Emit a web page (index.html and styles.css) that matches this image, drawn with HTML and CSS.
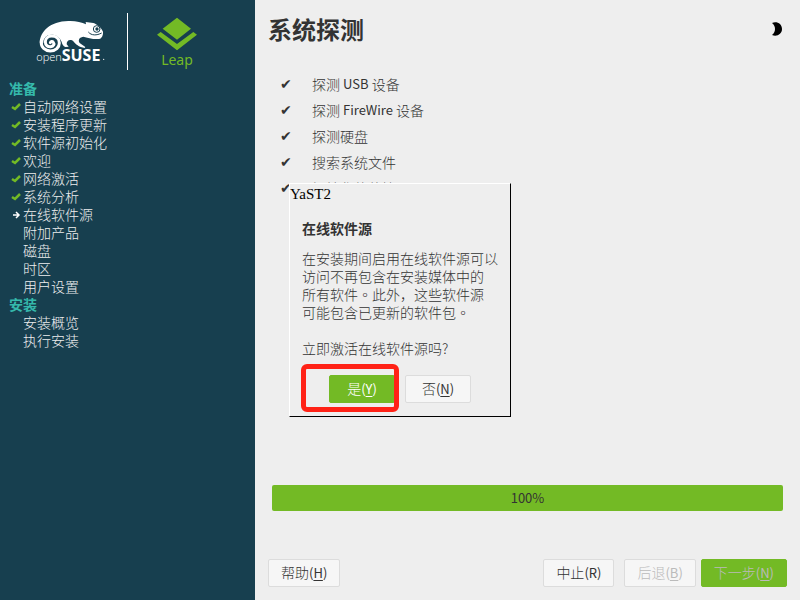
FILE: index.html
```html
<!DOCTYPE html>
<html lang="zh-CN">
<head>
	<meta charset="UTF-8">
	<title>YaST2</title>
	<link rel="stylesheet" href="styles.css">
</head>
<body>
<aside class="sidebar">
	<div class="brand">
		<svg class="brand-suse" viewBox="105 48 216 150" role="img" aria-label="openSUSE">
			<path fill="#fff" d="M119 128C121 94 150 64 205 63C225 62 245 66 258 73L257 66L280 69C292 73 305 85 309 95C310 105 306 115 297 117C280 119 262 112 250 110C235 113 234 122 240 130L256 141L254 144L242 141C228 136 222 125 216 121C206 118 200 123 200 133L206 140L196 141C190 139 186 132 185 126C180 112 168 104 154 104C140 104 130 114 130 128Z"/>
			<path fill="none" stroke="#fff" stroke-width="9" stroke-linecap="round" d="M124 125C122 142 136 153 151 153C167 153 178 142 178 129C178 115 167 108 155 108C143 108 136 117 136 126C136 136 144 141 152 140C161 139 164 132 160 127C157 123 152 124 151 128"/>
			<path fill="none" stroke="#173f4f" stroke-width="3" d="M265 96C274 107 290 107 305 99"/>
			<circle cx="290" cy="87" r="10" fill="#fff" stroke="#173f4f" stroke-width="3"/>
			<circle cx="291" cy="87" r="5" fill="#173f4f"/>
			<text class="logo-open" x="109" y="182">open</text>
			<text class="logo-suse" x="185" y="182">SUSE</text>
			<circle cx="311" cy="178" r="2" fill="#fff"/>
		</svg>
		<div class="brand-leap">
			<svg viewBox="471 51 120 100" aria-hidden="true">
				<path fill="#73ba25" d="M531 52L573 85L531 118L488 85ZM471 103L482 95L531 131L580 95L591 103L531 150Z"/>
			</svg>
			<span>Leap</span>
		</div>
	</div>
	<svg class="defs" aria-hidden="true">
		<symbol id="tick" viewBox="0 0 10 8"><path fill="none" stroke="#73ba25" stroke-width="2.5" d="M1 4L4 6L9 1"/></symbol>
		<symbol id="arrow" viewBox="0 0 10 8"><path fill="none" stroke="#fff" stroke-width="1.5" d="M2 4H8M5 1L8 4L5 7"/></symbol>
	</svg>
	<h2>准备</h2>
	<ul class="steps">
		<li><svg><use href="#tick"/></svg>自动网络设置</li>
		<li><svg><use href="#tick"/></svg>安装程序更新</li>
		<li><svg><use href="#tick"/></svg>软件源初始化</li>
		<li><svg><use href="#tick"/></svg>欢迎</li>
		<li><svg><use href="#tick"/></svg>网络激活</li>
		<li><svg><use href="#tick"/></svg>系统分析</li>
		<li><svg><use href="#arrow"/></svg>在线软件源</li>
		<li>附加产品</li>
		<li>磁盘</li>
		<li>时区</li>
		<li>用户设置</li>
	</ul>
	<h2>安装</h2>
	<ul class="steps">
		<li>安装概览</li>
		<li>执行安装</li>
	</ul>
</aside>
<main class="content">
	<header class="top">
		<h1>系统探测</h1>
		<button type="button" class="theme" aria-label="主题">
			<svg viewBox="0 0 12 14"><path d="M1 1C6-1 11 2 11 7C11 12 6 15 1 13C5 10 5 4 1 1Z"/></svg>
		</button>
	</header>
	<ul class="probes">
		<li>探测 <span class="latin">USB</span> 设备</li>
		<li>探测 <span class="latin">FireWire</span> 设备</li>
		<li>探测硬盘</li>
		<li>搜索系统文件</li>
		<li>初始化软件管理器</li>
	</ul>
	<div class="progress" role="progressbar" aria-valuenow="100">100%</div>
	<footer class="actions">
		<button type="button" class="btn help">帮助<span class="latin">(<u>H</u>)</span></button>
		<button type="button" class="btn">中止<span class="latin">(R)</span></button>
		<button type="button" class="btn back" disabled>后退<span class="latin">(<u>B</u>)</span></button>
		<button type="button" class="btn btn-primary next" disabled>下一步<span class="latin">(<u>N</u>)</span></button>
	</footer>
	<div class="dialog" role="dialog" aria-labelledby="dialogTitle">
		<div class="dialog-bar">YaST2</div>
		<h3 id="dialogTitle">在线软件源</h3>
		<p>在安装期间启用在线软件源可以<br>访问不再包含在安装媒体中的<br>所有软件<span class="stop" lang="zh-TW">。</span>此外，这些软件源<br>可能包含已更新的软件包<span class="stop" lang="zh-TW">。</span></p>
		<p>立即激活在线软件源吗?</p>
		<div class="dialog-buttons">
			<div class="marked">
				<button type="button" class="btn btn-primary">是<span class="latin">(<u>Y</u>)</span></button>
			</div>
			<button type="button" class="btn">否<span class="latin">(<u>N</u>)</span></button>
		</div>
	</div>
</main>
</body>
</html>
```
FILE: styles.css
```css
* {
	box-sizing: border-box;
}
body {
	margin: 0;
	min-height: 100vh;
	display: flex;
	background: #eee;
	color: #333;
	font: 300 14px/18px "Noto Sans CJK SC", sans-serif;
}
h1, h2, h3, p, ul {
	margin: 0;
	padding: 0;
}
ul {
	list-style: none;
}
.latin {
	font-size: 13px;
	font-weight: 400;
}

/* sidebar */
.sidebar {
	flex: 0 0 255px;
	background: #173f4f;
	color: #eee;
}
.brand {
	display: flex;
	height: 57px;
	margin: 13px 0 9px 35px;
}
.brand-suse {
	width: 72px;
	height: 50px;
	margin: 3px 20px 0 0;
}
.logo-open, .logo-suse {
	fill: #fff;
	font-family: "Open Sans", sans-serif;
	font-size: 33px;
}
.logo-suse {
	font-family: "Noto Sans", sans-serif;
	font-size: 48px;
	font-weight: 700;
}
.brand-leap {
	display: flex;
	flex-direction: column;
	align-items: center;
	padding: 4px 0 0 29px;
	border-left: 1px solid #fff;
	color: #73ba25;
	font: 14px/18px "Noto Sans", sans-serif;
}
.brand-leap svg {
	width: 40px;
	height: 34px;
}
.defs {
	display: none;
}
.sidebar h2 {
	padding-left: 9px;
	color: #35b9ab;
	font-size: 14px;
	font-weight: 700;
	line-height: 18px;
}
.steps li {
	position: relative;
	padding-left: 23px;
}
.steps svg {
	position: absolute;
	left: 11px;
	top: 6px;
	width: 10px;
	height: 8px;
}

/* main area */
.content {
	position: relative;
	flex: 1;
	display: flex;
	flex-direction: column;
	padding: 11px 13px 13px;
}
.top {
	display: flex;
	justify-content: space-between;
	align-items: center;
}
.top h1 {
	font-size: 24px;
	font-weight: 700;
	line-height: 36px;
}
.theme {
	width: 16px;
	height: 36px;
	padding: 0;
	border: 0;
	background: none;
}
.theme svg {
	display: block;
	width: 12px;
	height: 14px;
}
.probes {
	margin: 24px 0 0 12px;
	line-height: 26px;
}
.probes li {
	display: flex;
	align-items: center;
	height: 26px;
	white-space: pre;
}
.probes li:before {
	content: "✔";
	width: 32px;
	font-family: "DejaVu Sans", sans-serif;
	font-size: 14px;
}
.progress {
	margin: auto 4px 48px;
	background: #73ba25;
	border-radius: 2px;
	font-size: 13px;
	font-weight: 400;
	line-height: 26px;
	text-align: center;
}
.actions {
	display: flex;
}
.help {
	margin-right: auto;
}
.back {
	margin: 0 5px 0 10px;
}
.btn {
	height: 28px;
	padding: 0 12px 2px;
	border: 1px solid #dcdcdc;
	border-radius: 2px;
	background: #f6f6f6;
	color: #333;
	font: inherit;
	white-space: nowrap;
}
.btn:disabled {
	color: #bbb;
}
.btn-primary {
	border-color: #73ba25;
	background: #73ba25;
	color: #fff;
}
.btn u {
	text-underline-offset: 2px;
}

/* popup */
.dialog {
	position: absolute;
	left: 34px;
	top: 183px;
	width: 222px;
	padding: 0 12px 13px;
	border: 1px solid;
	border-color: #fff #000 #000 #fff;
	background: #eee;
}
.dialog-bar {
	margin: 0 -12px 15px;
	color: #000;
	font: 15px/20px "Liberation Serif", serif;
}
.dialog h3 {
	margin-bottom: 12px;
	font-size: 14px;
	font-weight: 700;
}
.dialog p {
	margin-bottom: 18px;
	white-space: nowrap;
}
.stop {
	font-family: "Noto Sans CJK TC", sans-serif;
}
.dialog-buttons {
	display: flex;
	gap: 10px;
	padding-left: 27px;
}
.dialog-buttons .btn {
	min-width: 66px;
}
.marked {
	position: relative;
}
.marked:after {
	content: "";
	position: absolute;
	left: -28px;
	right: -4px;
	top: -11px;
	bottom: -9px;
	border: 5px solid #ff2216;
	border-radius: 6px;
	pointer-events: none;
}
```
